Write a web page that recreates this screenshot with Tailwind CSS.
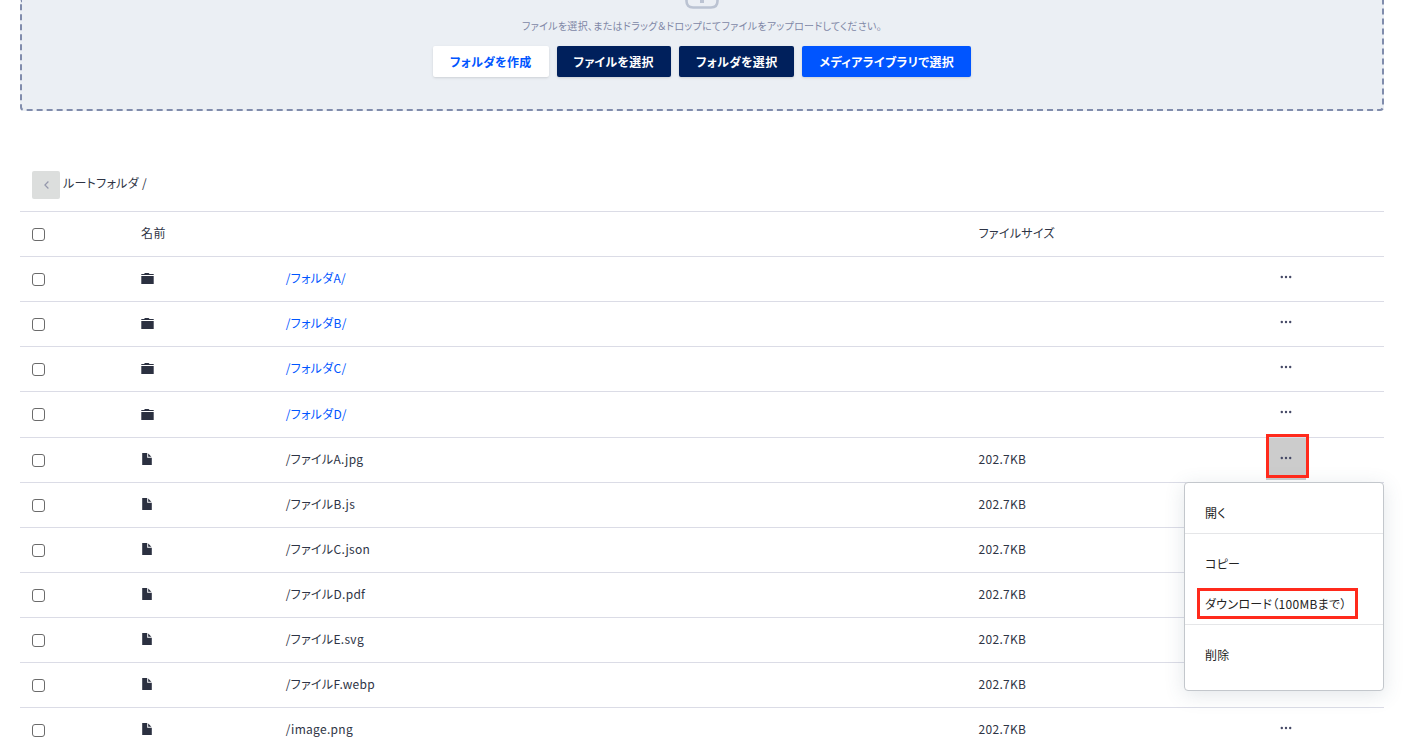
<!DOCTYPE html>
<html lang="ja">
<head>
    <meta charset="UTF-8">
    <meta name="viewport" content="width=device-width, initial-scale=1.0">
    <title>ファイルマネージャ</title>
    <script src="https://cdn.jsdelivr.net/npm/@tailwindcss/browser@4"></script>
</head>
<body class="overflow-hidden bg-white pr-[19px] pl-5 font-['Noto_Sans_CJK_JP',sans-serif] text-[12px] leading-5 tracking-wide text-[#2e3445] [font-feature-settings:'palt']">

    <!-- Icons -->
    <svg class="hidden" xmlns="http://www.w3.org/2000/svg">
        <symbol id="icon-folder" viewBox="0 0 13 12">
            <path d="M0.3 3V2H3L4 1H7.6L8.6 2H12.7V3Z M0.3 4H12.7V12H0.3Z" fill="#2b3040"/>
        </symbol>
        <symbol id="icon-file" viewBox="-1 0 13 12">
            <path d="M0.2 0H5.2V4.8H9.8V12H0.2Z" fill="#2b3040"/>
            <path d="M6.2 0.6L9.4 3.8H6.2Z" fill="#2b3040"/>
        </symbol>
        <symbol id="icon-dots" viewBox="0 0 12 4">
            <g fill="#454966">
                <circle cx="1.8" cy="2" r="1.2"/>
                <circle cx="6" cy="2" r="1.2"/>
                <circle cx="10.2" cy="2" r="1.2"/>
            </g>
        </symbol>
    </svg>

    <!-- Upload area -->
    <section class="flex flex-col items-center rounded-b border-2 border-t-0 border-dashed border-[#808cac] bg-[#ebeff4] pb-8">
        <svg class="h-[10px] w-[34px]" viewBox="0 0 34 10" fill="none" stroke="#bbc3d2">
            <path d="M1.5 -8V1Q1.5 7.5 8 7.5H26Q32.5 7.5 32.5 1V-8" stroke-width="2.6"/>
            <path d="M17 -6V3" stroke-width="4"/>
        </svg>
        <p class="mt-[6px] text-[10px] text-[#8087a6]">ファイルを選択、またはドラッグ＆ドロップにてファイルをアップロードしてください。</p>
        <div class="mt-[10px] flex gap-2 font-bold">
            <button type="button" class="h-[31px] rounded-xs bg-white px-[17px] text-[#0055ff] shadow-sm">フォルダを作成</button>
            <button type="button" class="h-[31px] rounded-xs bg-[#00205c] px-[17px] text-white shadow-sm">ファイルを選択</button>
            <button type="button" class="h-[31px] rounded-xs bg-[#00205c] px-[17px] text-white shadow-sm">フォルダを選択</button>
            <button type="button" class="h-[31px] rounded-xs bg-[#0055ff] px-[17px] text-white shadow-sm">メディアライブラリで選択</button>
        </div>
    </section>

    <!-- Breadcrumb -->
    <nav class="mt-[60px] mb-3 flex items-center gap-[3px] px-3">
        <button type="button" aria-label="戻る" class="flex size-7 items-center justify-center rounded-xs bg-[#dcdedd]">
            <svg class="h-2 w-[5px]" viewBox="0 0 5 8" fill="none" stroke="#9497ab" stroke-width="1.2"><path d="M4.4 0.5L0.9 4L4.4 7.5"/></svg>
        </button>
        <span class="pb-1">ルートフォルダ /</span>
    </nav>

    <!-- File list -->
    <table class="w-full table-fixed border-separate border-spacing-0 text-left [&_td]:border-t [&_td]:border-[#dbdce6] [&_td]:px-3 [&_td]:pt-0 [&_td]:pb-[2px] [&_th]:border-t [&_th]:border-[#dbdce6] [&_th]:px-3 [&_th]:pt-0 [&_th]:pb-[2px] [&_th]:font-normal">
        <colgroup>
            <col class="w-[8%]">
            <col class="w-[10.6%]">
            <col class="w-[50.8%]">
            <col class="w-[21.1%]">
            <col>
        </colgroup>
        <thead>
            <tr class="h-[45px]">
                <th><input type="checkbox" aria-label="すべて選択" class="mt-[2px] block size-[13px] appearance-none rounded-[3px] border border-[#6b6b6b] bg-white"></th>
                <th colspan="2">名前</th>
                <th>ファイルサイズ</th>
                <th></th>
            </tr>
        </thead>
        <tbody id="folder-list" class="[&>tr:last-child]:h-[46px]"></tbody>
        <tbody id="file-list"></tbody>
    </table>

    <template id="row-template">
        <tr class="h-[45px]">
            <td><input type="checkbox" class="mt-[2px] block size-[13px] appearance-none rounded-[3px] border border-[#6b6b6b] bg-white"></td>
            <td><svg class="block h-3 w-[13px]"><use></use></svg></td>
            <td data-name></td>
            <td data-size></td>
            <td class="relative">
                <button type="button" aria-label="メニュー" class="flex h-[42px] w-10 items-center justify-center pb-[3px]">
                    <svg class="h-1 w-3"><use href="#icon-dots"></use></svg>
                </button>
            </td>
        </tr>
    </template>

    <template id="menu-template">
        <span class="pointer-events-none absolute top-[-4px] left-3 z-20 h-11 w-[43px] border-3 border-[#ff2a1c]"></span>
        <div class="absolute top-full right-0 z-10 w-[200px] rounded border border-[#c3c7cc] bg-white pb-[15px] text-[#222] shadow-[0_4px_20px_rgba(60,90,110,0.15)]">
            <div class="border-b border-[#e5e6e8] pt-[10px]">
                <button type="button" class="block h-10 w-full px-5 text-left">開く</button>
            </div>
            <div class="border-b border-[#e5e6e8] pt-[10px]">
                <button type="button" class="block h-10 w-full px-5 text-left">コピー</button>
                <button type="button" class="relative block h-10 w-full px-5 text-left">
                    ダウンロード（100MBまで）
                    <span class="pointer-events-none absolute top-1 left-3 h-[31px] w-[161px] border-3 border-[#ff2a1c]"></span>
                </button>
            </div>
            <div class="pt-[10px]">
                <button type="button" class="block h-10 w-full px-5 text-left">削除</button>
            </div>
        </div>
    </template>

    <script>
        const items = [
            { name: '/フォルダA/', folder: true },
            { name: '/フォルダB/', folder: true },
            { name: '/フォルダC/', folder: true },
            { name: '/フォルダD/', folder: true },
            { name: '/ファイルA.jpg', size: '202.7KB', open: true },
            { name: '/ファイルB.js', size: '202.7KB' },
            { name: '/ファイルC.json', size: '202.7KB' },
            { name: '/ファイルD.pdf', size: '202.7KB' },
            { name: '/ファイルE.svg', size: '202.7KB' },
            { name: '/ファイルF.webp', size: '202.7KB' },
            { name: '/image.png', size: '202.7KB' },
        ];

        const folderList = document.getElementById('folder-list');
        const fileList = document.getElementById('file-list');
        const rowTemplate = document.getElementById('row-template');
        const menuTemplate = document.getElementById('menu-template');

        items.forEach(item => {
            const row = rowTemplate.content.cloneNode(true);
            const name = row.querySelector('[data-name]');

            row.querySelector('input').setAttribute('aria-label', item.name);
            row.querySelector('use').setAttribute('href', item.folder ? '#icon-folder' : '#icon-file');
            row.querySelector('[data-size]').textContent = item.size || '';

            if (item.folder) {
                const link = document.createElement('a');
                link.href = '#';
                link.className = 'text-[#0055ff]';
                link.textContent = item.name;
                name.append(link);
            } else {
                name.textContent = item.name;
            }

            if (item.open) {
                const button = row.querySelector('button');
                button.classList.add('bg-[#cccccc]');
                button.parentElement.append(menuTemplate.content.cloneNode(true));
            }

            (item.folder ? folderList : fileList).append(row);
        });
    </script>
</body>
</html>
